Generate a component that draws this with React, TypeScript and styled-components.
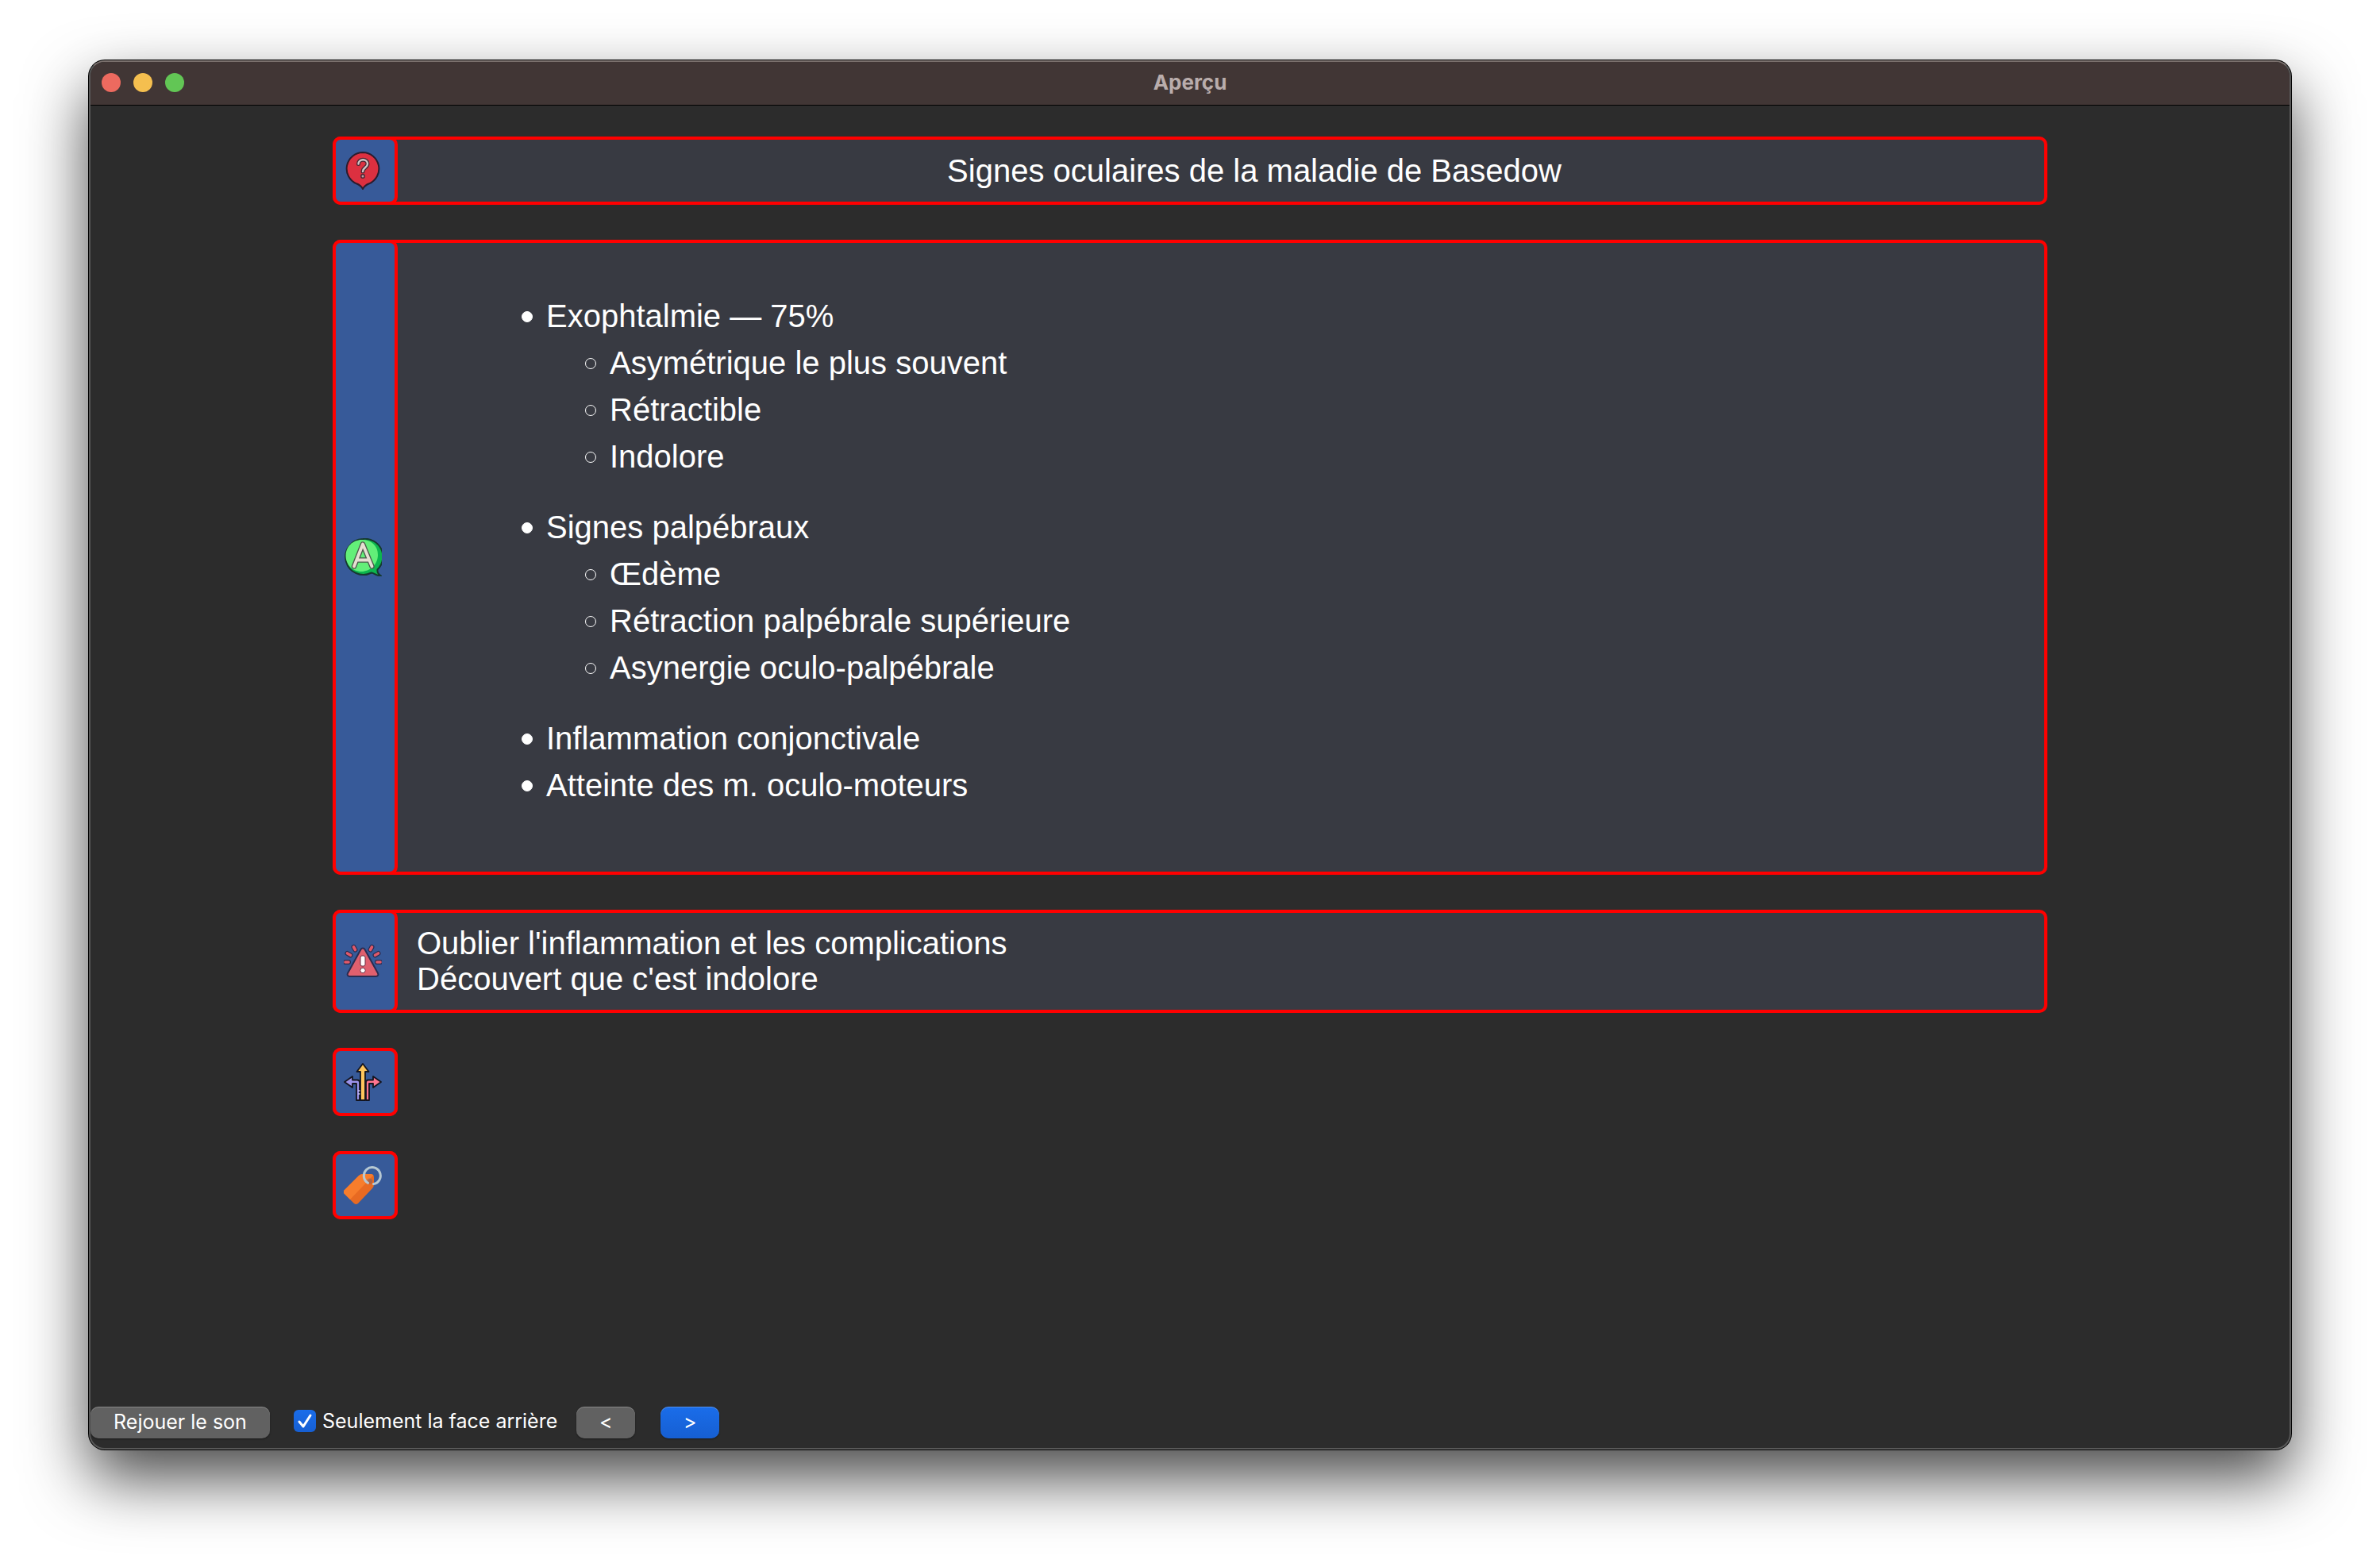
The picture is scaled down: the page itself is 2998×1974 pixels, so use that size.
import React, { useState } from "react";
import styled, { createGlobalStyle } from "styled-components";

const RED = "#ff0000";

const GlobalStyle = createGlobalStyle`
  *, *::before, *::after { box-sizing: border-box; }
  body {
    margin: 0;
    background: #fff;
    font-family: Inter, "Liberation Sans", sans-serif;
  }
`;

const Desktop = styled.div`
  min-height: 100vh;
  display: flex;
  flex-direction: column;
  padding: 76px 112px 148px;
  overflow: hidden;
`;

const Window = styled.main`
  flex: 1;
  display: flex;
  flex-direction: column;
  background: #2c2c2c;
  border: 2px solid #585858;
  border-top-color: #7a706d;
  border-radius: 20px;
  box-shadow: 0 0 0 1px #000, 0 36px 80px rgba(0, 0, 0, 0.72);
`;

const TitleBar = styled.header`
  display: grid;
  grid-template-columns: 1fr auto 1fr;
  align-items: center;
  height: 55px;
  padding: 0 14px 2px;
  background: #413635;
  border-bottom: 1px solid #000;
  border-radius: 18px 18px 0 0;
`;

const Lights = styled.div`
  display: flex;
  gap: 16px;
`;

const Light = styled.button<{ $color: string }>`
  width: 24px;
  height: 24px;
  padding: 0;
  border: 0;
  border-radius: 50%;
  background: ${(p) => p.$color};
`;

const Title = styled.h1`
  margin: 0;
  color: #b9adac;
  font-size: 26px;
  line-height: 32px;
  font-weight: 700;
`;

const Cards = styled.div`
  flex: 1;
  display: flex;
  flex-direction: column;
  align-items: flex-start;
  gap: 44px;
  width: 100%;
  max-width: 2160px;
  margin: 0 auto;
  padding: 39px 0;
  color: #fff;
  font-family: "Liberation Sans", Arial, sans-serif;
  font-size: 40px;
  line-height: 45px;
`;

const Card = styled.section<{ $bare?: boolean }>`
  display: flex;
  width: ${(p) => (p.$bare ? "auto" : "100%")};
  min-height: 86px;
  border: 4px solid ${RED};
  border-radius: 10px;
  background: #383a42;
`;

const Tab = styled.div`
  display: flex;
  align-items: center;
  flex: none;
  width: 82px;
  margin: -4px 0 -4px -4px;
  padding-left: 10px;
  border: 4px solid ${RED};
  border-radius: 10px;
  background: #375a99;
`;

const BareTab = styled(Tab)`
  margin-right: -4px;
`;

const Question = styled.h2`
  flex: 1;
  align-self: center;
  margin: 0;
  padding: 0 20px 0 104px;
  font-size: 40px;
  font-weight: 400;
  text-align: center;
`;

const Note = styled.p`
  margin: 0;
  padding: 16px 24px;
`;

const Answer = styled.div`
  flex: 1;
  padding: 63px 24px 79px 107px;
  line-height: 59px;
`;

const List = styled.ul`
  margin: 0;
  padding: 0 0 0 80px;
  list-style: none;
`;

const SubList = styled(List)`
  padding-bottom: 30px;
`;

const Item = styled.li<{ $hollow?: boolean }>`
  &::before {
    content: "";
    display: inline-block;
    vertical-align: middle;
    width: 14px;
    height: 14px;
    margin: 0 17px 4px -31px;
    border: 1px solid #fff;
    border-radius: 50%;
    background: ${(p) => (p.$hollow ? "transparent" : "#fff")};
  }
`;

const Footer = styled.footer`
  display: flex;
  align-items: center;
  padding-bottom: 12px;
  color: #fff;
  font-size: 25px;
  line-height: 32px;
`;

const Push = styled.button<{ $primary?: boolean; $wide?: boolean }>`
  width: ${(p) => (p.$wide ? "226px" : "74px")};
  height: 40px;
  padding: 0 0 2px;
  border: 0;
  border-radius: 10px;
  color: #fff;
  font: inherit;
  background: ${(p) => (p.$primary ? "linear-gradient(#1a6dea, #165fd2)" : "#616161")};
  box-shadow: inset 0 1px 0 rgba(255, 255, 255, 0.25), 0 1px 2px rgba(0, 0, 0, 0.4);
`;

const Check = styled.label`
  display: flex;
  align-items: center;
  gap: 8px;
  margin: 0 24px 4px 30px;
`;

const Box = styled.span`
  display: grid;
  width: 28px;
  height: 28px;
  > * { grid-area: 1 / 1; }
  svg { pointer-events: none; }
`;

const CheckInput = styled.input`
  appearance: none;
  width: 28px;
  height: 28px;
  margin: 0;
  border-radius: 6px;
  background: #5a5a5a;
  &:checked { background: linear-gradient(#1a6dea, #165fd2); }
`;

const Pager = styled.div`
  display: flex;
  gap: 32px;
`;

const iconProps = { width: 48, height: 48, viewBox: "0 0 48 48", "aria-hidden": true } as const;

const QuestionIcon = () => (
  <svg {...iconProps}>
    <path d="M24 1a20.500 20.500 0 0 0-8 39.300c4 1.600 6 2.700 8 6.700 2-4 4-5.100 8-6.700A20.500 20.500 0 0 0 24 1z" fill="#dc3040" stroke="#2b1c2e" strokeWidth="2" />
    <path d="M18.500 15.500c0-7 11.500-7 11.500 0 0 4.500-6 4.500-6 9.500" fill="none" stroke="#4a2733" strokeWidth="5" strokeLinecap="round" />
    <path d="M18.500 15.500c0-7 11.500-7 11.500 0 0 4.500-6 4.500-6 9.500" fill="none" stroke="#d0c6c7" strokeWidth="2.400" strokeLinecap="round" />
    <circle cx="24" cy="31" r="2.200" fill="#b9a3a8" stroke="#4a2733" strokeWidth="1.400" />
  </svg>
);

const AnswerIcon = () => (
  <svg {...iconProps}>
    <path d="M24 1A22.500 22.500 0 1 0 35 43.500c3 0 5 4 12 4-3-2-5-5-4.500-8A22.500 22.500 0 0 0 24 1z" fill="#0db54e" stroke="#16392f" strokeWidth="2" />
    <path d="M23 2C11 2 2.500 11 2.500 22S11 42 22 42s21-9 21-21S34 2 23 2z" fill="#63ef79" />
    <path d="M13 35.500 24 7.500l11.500 28M17.500 27.500h13" fill="none" stroke="#4c5a4c" strokeWidth="6.500" strokeLinecap="round" strokeLinejoin="round" />
    <path d="M13 35.500 24 7.500l11.500 28M17.500 27.500h13" fill="none" stroke="#e6dfd3" strokeWidth="3.800" strokeLinecap="round" strokeLinejoin="round" />
  </svg>
);

const rays = "M12.500 6l2 3.500M4.500 14l4 2.300M2 25h4M35.500 6l-2 3.500M43.500 14l-4 2.300M46 25h-4";

const WarningIcon = () => (
  <svg {...iconProps}>
    <path d={rays} stroke="#2a2c50" strokeWidth="6" strokeLinecap="round" />
    <path d={rays} stroke="#e0596a" strokeWidth="3.600" strokeLinecap="round" />
    <path d="M21.500 9c1-2 4-2 5 0l16.500 30c1 2 0 4-2.500 4h-33C5 43 4 41 5 39z" fill="#e0606e" stroke="#2a2c50" strokeWidth="2" strokeLinejoin="round" />
    <rect x="21" y="17" width="6" height="13" rx="2" fill="#fff" stroke="#6d3346" strokeWidth="1" />
    <circle cx="24" cy="35.500" r="3.200" fill="#fff" stroke="#6d3346" strokeWidth="1" />
  </svg>
);

const ArrowsIcon = () => (
  <svg {...iconProps}>
    <g stroke="#14151f" strokeWidth="1.800" strokeLinejoin="round">
      <path d="M1 24l10-7v4.500h6c2 0 3 1 3 3V47h-4V26h-5v5z" fill="#9c93ea" />
      <path d="M47 24l-10-7v4.500h-6c-2 0-3 1-3 3V47h4V26h5v5z" fill="#ff7590" />
      <path d="M24 1l7.500 10H27v36h-6V11h-4.500z" fill="#ffc65c" />
    </g>
    <path d="M18 35h2.500M18 39h2.500" stroke="#c9c3f3" strokeWidth="1.500" />
  </svg>
);

const TagIcon = () => (
  <svg {...iconProps}>
    <path d="M0 31 19 12q2-2 5-2h10q4 0 4 4v9q0 3-2 5L18 47q-2.500 2-5 0L0 34q-1-1.500 0-3z" fill="#e86a22" />
    <path d="M0 31 19 12q2-2 5-2h10q2.500 0 3.300 1.500L8 42 0 34q-1-1.500 0-3z" fill="#f77d2c" />
    <circle cx="32.500" cy="19" r="3.500" fill="#375a99" opacity=".35" />
    <path d="M30.500 21.200A10.500 10.500 0 1 1 37.500 22.500" fill="none" stroke="#b7c8d2" strokeWidth="3" strokeLinecap="round" />
  </svg>
);

const CheckMark = () => (
  <svg width="28" height="28" viewBox="0 0 28 28" aria-hidden="true">
    <path d="M7 15l5 6 9-14" fill="none" stroke="#fff" strokeWidth="3" strokeLinecap="round" strokeLinejoin="round" />
  </svg>
);

const signs = [
  { label: "Exophtalmie — 75%", details: ["Asymétrique le plus souvent", "Rétractible", "Indolore"] },
  { label: "Signes palpébraux", details: ["Œdème", "Rétraction palpébrale supérieure", "Asynergie oculo-palpébrale"] },
  { label: "Inflammation conjonctivale", details: [] },
  { label: "Atteinte des m. oculo-moteurs", details: [] },
];

export default function App() {
  const [backOnly, setBackOnly] = useState(true);

  return (
    <>
      <GlobalStyle />
      <Desktop>
        <Window>
          <TitleBar>
            <Lights>
              <Light $color="#ed6a5f" />
              <Light $color="#f5bf4f" />
              <Light $color="#62c655" />
            </Lights>
            <Title>Aperçu</Title>
          </TitleBar>

          <Cards>
            <Card>
              <Tab><QuestionIcon /></Tab>
              <Question>Signes oculaires de la maladie de Basedow</Question>
            </Card>

            <Card>
              <Tab><AnswerIcon /></Tab>
              <Answer>
                <List>
                  {signs.map((sign) => (
                    <Item key={sign.label}>
                      {sign.label}
                      {sign.details.length > 0 && (
                        <SubList>
                          {sign.details.map((d) => (
                            <Item key={d} $hollow>{d}</Item>
                          ))}
                        </SubList>
                      )}
                    </Item>
                  ))}
                </List>
              </Answer>
            </Card>

            <Card>
              <Tab><WarningIcon /></Tab>
              <Note>
                Oublier l'inflammation et les complications
                <br />
                Découvert que c'est indolore
              </Note>
            </Card>

            <Card $bare>
              <BareTab><ArrowsIcon /></BareTab>
            </Card>

            <Card $bare>
              <BareTab><TagIcon /></BareTab>
            </Card>
          </Cards>

          <Footer>
            <Push $wide>Rejouer le son</Push>
            <Check>
              <Box>
                <CheckInput
                  type="checkbox"
                  checked={backOnly}
                  onChange={(e) => setBackOnly(e.target.checked)}
                />
                {backOnly && <CheckMark />}
              </Box>
              Seulement la face arrière
            </Check>
            <Pager>
              <Push>&lt;</Push>
              <Push $primary>&gt;</Push>
            </Pager>
          </Footer>
        </Window>
      </Desktop>
    </>
  );
}
